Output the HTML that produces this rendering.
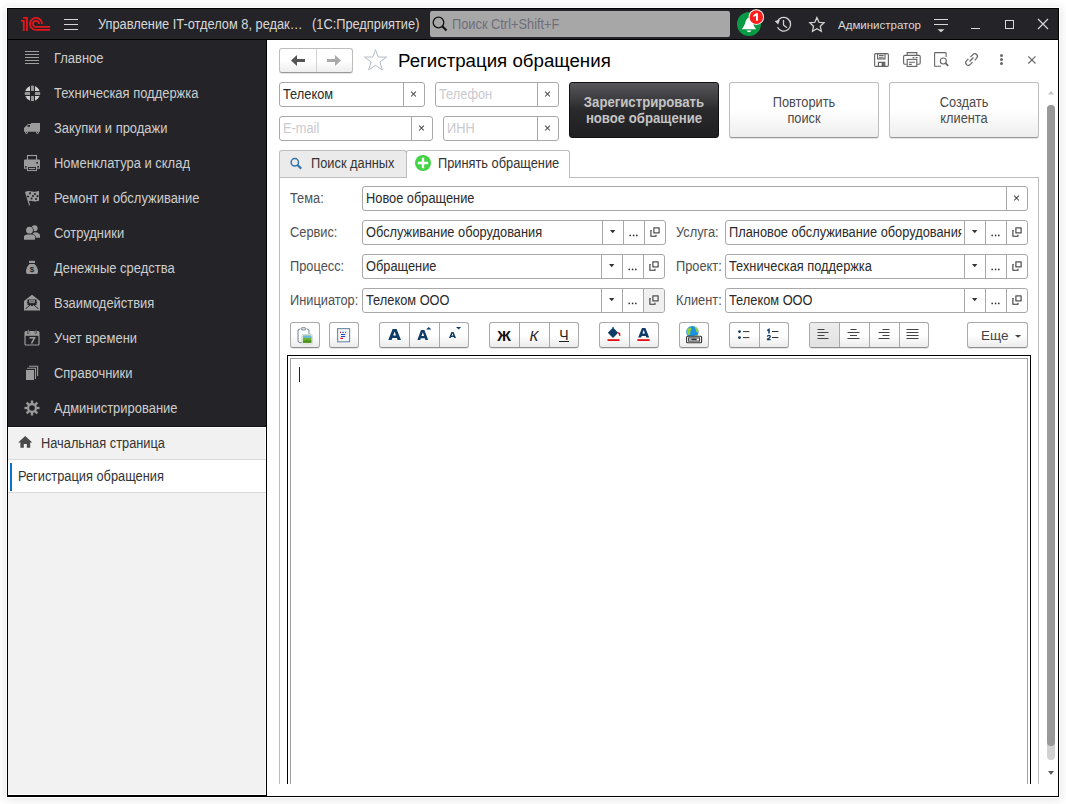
<!DOCTYPE html>
<html><head><meta charset="utf-8">
<style>
*{box-sizing:border-box;margin:0;padding:0}
html,body{width:1066px;height:804px;overflow:hidden;background:#fff;font-family:"Liberation Sans",sans-serif;font-size:13px}
.a{position:absolute}
svg{position:absolute;overflow:visible}
.t{position:absolute;white-space:nowrap;line-height:15px;font-size:14px;transform:scaleX(0.915);transform-origin:0 0}
.tc{transform-origin:50% 0}
.nt{transform:none}
#win{position:absolute;left:7px;top:8px;width:1052px;height:789px;border:1px solid #000;background:#fff;box-shadow:0 0 0 1px #fff,0 1px 9px 2px rgba(0,0,0,0.10)}
#hdr{position:absolute;left:0;top:0;width:1050px;height:31px;background:#242428;border-bottom:1px solid #000}
#side{position:absolute;left:0;top:31px;width:258px;height:387px;background:#242428;border-bottom:1px solid #121215}
.si{color:#cdcdcd;transform:scaleX(0.925)}
#lower{position:absolute;left:0;top:418px;width:258px;height:369px;background:#f2f2f2;border-top:1px solid #fff;border-right:1px solid #fff}
#vsep{position:absolute;left:258px;top:31px;width:1px;height:756px;background:#000}
#clip{position:absolute;left:259px;top:31px;width:791px;height:744px;overflow:hidden}
.fld{position:absolute;border:1px solid #a8a8a8;border-radius:3px;background:#fff;height:25px}
.dv{position:absolute;top:0;width:1px;height:23px;background:#a8a8a8}
.btn{position:absolute;border:1px solid #bdbdbd;border-bottom-color:#999;border-radius:3px;background:linear-gradient(#fff 0%,#fff 50%,#eee 100%);box-shadow:0 1px 0 rgba(0,0,0,0.10)}
.tb{position:absolute;height:26px;border:1px solid #a9a9a9;border-bottom-color:#8f8f8f;border-radius:3px;background:linear-gradient(#fff 0%,#fff 50%,#ececec 100%);box-shadow:0 1px 0 rgba(0,0,0,0.10)}
.tdv{position:absolute;top:0;width:1px;height:24px;background:#a9a9a9}
.lbl{color:#505050}
.ph{color:#c9c9d0}
.val{color:#2a2a2a}
.xx{position:absolute;top:5px;font-size:12px;line-height:13px;color:#555;text-align:center}
.ic{fill:#9b9b9b}
</style></head><body>
<div id="win">
  <div id="hdr">
    <svg style="left:10px;top:5px" width="36" height="20" viewBox="0 0 36 20">
      <g fill="none" stroke="#e3161c" stroke-width="1.8">
        <path d="M4.9 3.8 H8.95 V16.9"/>
        <path d="M3 6.85 H5.8 V16.9"/>
        <path d="M24.05 9.9 A6.05 6.05 0 1 0 18 15.95 H32.1"/>
        <path d="M21.07 9.9 A3.07 3.07 0 1 0 18 12.97 H32.1"/>
      </g>
    </svg>
    <div class="a" style="left:56px;top:9.8px;width:14px;height:1.5px;background:#d4d4d4"></div>
    <div class="a" style="left:56px;top:14.8px;width:14px;height:1.5px;background:#d4d4d4"></div>
    <div class="a" style="left:56px;top:19.8px;width:14px;height:1.5px;background:#d4d4d4"></div>
    <div class="t" style="left:90px;top:8px;color:#d8d8d8">Управление IT-отделом 8, редак…</div>
    <div class="t" style="left:304px;top:8px;color:#d8d8d8">(1С:Предприятие)</div>
    <div class="a" style="left:422px;top:2px;width:300px;height:26px;background:#a7a7a7;border-radius:2px"></div>
    <svg style="left:424px;top:7px" width="16" height="16" viewBox="0 0 16 16"><circle cx="6.5" cy="6.5" r="5.3" fill="none" stroke="#111" stroke-width="1.3"/><path d="M10.3 10.3 L14.5 14.5" stroke="#111" stroke-width="2"/></svg>
    <div class="t" style="left:444px;top:8px;color:#6e6e7a">Поиск Ctrl+Shift+F</div>
    <!-- bell -->
    <svg style="left:729px;top:3px" width="26" height="26" viewBox="0 0 26 26">
      <circle cx="12" cy="12" r="12" fill="#089a45"/>
      <path d="M4.8 17.2 C6.5 15.5 7.5 13 8.5 10 C9.5 7 10.5 5.8 12 5.8 C13.5 5.8 14.5 7 15.5 10 C16.5 13 17.5 15.5 19.2 17.2 Z" fill="#fff"/>
      <path d="M9.5 18.6 H14.5 C13.8 19.8 13 20.3 12 20.3 C11 20.3 10.2 19.8 9.5 18.6Z" fill="#fff"/>
    </svg>
    <svg style="left:740px;top:0px" width="18" height="18" viewBox="0 0 18 18">
      <circle cx="8.3" cy="8.1" r="7.8" fill="#fff"/>
      <circle cx="8.3" cy="8.1" r="6.8" fill="#fe1e1e"/>
      <path d="M5.2 6.3 L8.1 4.3 H9.9 V11.8 H8 V6.8 L5.7 8 Z" fill="#fff"/>
    </svg>
    <!-- history -->
    <svg style="left:762px;top:1px" width="22" height="22" viewBox="0 0 22 22">
      <g fill="none" stroke="#d4d4d4" stroke-width="1.25">
        <path d="M7.22 11.94 A6.9 6.9 0 1 1 7.5 17.3"/>
        <path d="M13.5 10.1 V14.9 L16.9 17.7"/>
      </g>
      <path d="M4.6 11.1 L9.8 10.1 L8.1 14.4 Z" fill="#d4d4d4"/>
    </svg>
    <!-- star -->
    <svg style="left:800px;top:7px" width="18" height="17" viewBox="0 0 18 17">
      <path d="M8.90 1.60 L10.97 6.25 L16.03 6.78 L12.25 10.19 L13.31 15.17 L8.90 12.62 L4.49 15.17 L5.55 10.19 L1.77 6.78 L6.83 6.25 Z" fill="none" stroke="#d4d4d4" stroke-width="1.25"/>
    </svg>
    <div class="t nt" style="left:830px;top:9px;color:#d8d8d8;font-size:11.5px">Администратор</div>
    <!-- filter -->
    <div class="a" style="left:926px;top:10px;width:14px;height:1.3px;background:#d8d8d8"></div>
    <div class="a" style="left:926px;top:15px;width:14px;height:1.3px;background:#d8d8d8"></div>
    <svg style="left:929px;top:19.6px" width="8" height="4" viewBox="0 0 8 4"><path d="M0.5 0.3 H7.5 L4 3.3Z" fill="#d8d8d8"/></svg>
    <!-- min max close -->
    <div class="a" style="left:963px;top:19px;width:9px;height:1.3px;background:#d8d8d8"></div>
    <div class="a" style="left:997px;top:11px;width:9px;height:9px;border:1.3px solid #d8d8d8"></div>
    <svg style="left:1030px;top:10px" width="10" height="10" viewBox="0 0 10 10"><path d="M0 0 L10 10 M10 0 L0 10" stroke="#d8d8d8" stroke-width="1.2"/></svg>
  </div>
  <div id="side">
    <!-- icons; box origin page(20, 46+35k) => inner (12, 6+35k) -->
    <svg style="left:12px;top:6px" width="24" height="24" viewBox="0 0 24 24"><g fill="#a0a0a0"><rect x="5" y="5" width="14" height="1"/><rect x="5" y="8" width="14" height="1"/><rect x="5" y="11" width="14" height="1"/><rect x="5" y="14" width="14" height="1"/><rect x="5" y="17" width="14" height="1"/></g></svg>
    <svg style="left:12px;top:42px" width="24" height="24" viewBox="0 0 24 24">
      <circle cx="12.45" cy="11.4" r="7.6" fill="#cfcfcf"/>
      <g fill="#242428"><rect x="10" y="3" width="1" height="17"/><rect x="14" y="3" width="1" height="17"/><rect x="4" y="9" width="17" height="1"/><rect x="4" y="13" width="17" height="1"/><rect x="10" y="9" width="5" height="5"/></g>
      <g fill="#979797"><rect x="11" y="3.8" width="3" height="5.2"/><rect x="11" y="14" width="3" height="5.1"/><rect x="4.9" y="10" width="5.1" height="3"/><rect x="15" y="10" width="5.1" height="3"/></g><rect x="11" y="10" width="3" height="3" fill="#242428"/>
    </svg>
    <svg style="left:12px;top:76px" width="24" height="24" viewBox="0 0 24 24">
      <path d="M4 12 L8 8 H11 V7 H20 V15.8 H4 Z" fill="#9b9b9b"/>
      <rect x="7.5" y="9" width="2.5" height="1.8" fill="#242428"/>
      <circle cx="6.5" cy="16.6" r="1.4" fill="#9b9b9b"/><circle cx="17.5" cy="16.6" r="1.4" fill="#9b9b9b"/>
      <circle cx="6.5" cy="16.6" r="0.5" fill="#242428"/><circle cx="17.5" cy="16.6" r="0.5" fill="#242428"/>
    </svg>
    <svg style="left:12px;top:111px" width="24" height="24" viewBox="0 0 24 24">
      <g fill="none" stroke="#9b9b9b" stroke-width="1.1"><rect x="7.5" y="4.5" width="9" height="5"/><rect x="7.5" y="15.5" width="9" height="4"/></g>
      <path d="M4 9.5 Q4 8.5 5 8.5 H19 Q20 8.5 20 9.5 V17.8 H17 V15 H7 V17.8 H4 Z" fill="#9b9b9b"/>
      <rect x="16.3" y="11" width="1.6" height="1.6" fill="#242428"/>
      <rect x="5" y="15" width="1.6" height="1.6" fill="#242428"/><rect x="17.4" y="15" width="1.6" height="1.6" fill="#242428"/>
      <rect x="9" y="17" width="6" height="1" fill="#9b9b9b"/>
    </svg>
    <svg style="left:12px;top:146px" width="24" height="24" viewBox="0 0 24 24">
      <path d="M5 6 Q8 4.5 12 5.5 Q15 6.3 19 5 V14.8 Q15 16 12 15 Q10 14.4 9 15 L10 19.5 H9 L5 6 Z" fill="#9b9b9b"/>
      <g fill="#242428"><circle cx="10" cy="7.3" r="1.1"/><circle cx="15" cy="8" r="1.1"/><circle cx="8" cy="10.5" r="1.1"/><circle cx="13" cy="10" r="1.1"/><circle cx="17.5" cy="10.2" r="1.1"/><circle cx="11.5" cy="12.5" r="1.1"/><circle cx="16" cy="13" r="1.1"/></g>
    </svg>
    <svg style="left:12px;top:181px" width="24" height="24" viewBox="0 0 24 24">
      <g fill="#9b9b9b"><circle cx="14.6" cy="7.2" r="3"/><path d="M13 12 Q14.6 11 17 11.5 Q20 12.5 20 14 V16.8 H13 Z"/></g>
      <g fill="#242428"><circle cx="9.5" cy="9.5" r="4.3"/><path d="M3 18.8 V14.5 Q4 13 6.5 12.8 H12.5 Q15 13 15.6 14.5 V18.8Z" transform="translate(0,0.4)"/></g>
      <g fill="#9b9b9b"><circle cx="9.5" cy="9.2" r="3.4"/><path d="M4 18.8 V15 Q5 13.6 7 13.4 H12 Q14 13.6 15 15 V18.8Z"/></g>
    </svg>
    <svg style="left:12px;top:216px" width="24" height="24" viewBox="0 0 24 24">
      <rect x="9" y="4.8" width="6" height="2.2" fill="#9b9b9b"/>
      <path d="M6 16 Q6 11 9.5 8 H14.5 Q18 11 18 16 Q18 18 16 18 H8 Q6 18 6 16Z" fill="#9b9b9b"/>
      <text x="12" y="15.6" font-size="8" font-weight="bold" text-anchor="middle" fill="#242428" font-family="Liberation Sans">$</text>
    </svg>
    <svg style="left:12px;top:251px" width="24" height="24" viewBox="0 0 24 24">
      <path d="M4 10 L12 3.8 L20 10 V19.6 H4 Z" fill="#9b9b9b"/>
      <rect x="7.5" y="8.5" width="9" height="5.5" fill="#242428"/>
      <rect x="9" y="9" width="6" height="3.2" fill="#7a7a7a"/>
      <path d="M5.5 17.8 L10 14 M18.5 17.8 L14 14 M7 11 L12 15 L17 11" stroke="#242428" stroke-width="1" fill="none"/>
    </svg>
    <svg style="left:12px;top:286px" width="24" height="24" viewBox="0 0 24 24">
      <path d="M4.5 6.5 Q4.5 5 6 5 H18 Q19.5 5 19.5 6.5 V9.5 H4.5Z" fill="#9b9b9b"/>
      <rect x="5" y="9" width="14" height="10" rx="1" fill="none" stroke="#9b9b9b" stroke-width="1.2"/>
      <rect x="7.6" y="3.8" width="1.4" height="3.6" fill="#9b9b9b" stroke="#242428" stroke-width="0.5"/>
      <rect x="15" y="3.8" width="1.4" height="3.6" fill="#9b9b9b" stroke="#242428" stroke-width="0.5"/>
      <path d="M9.5 11.8 H14.5 L11.5 17.5" fill="none" stroke="#9b9b9b" stroke-width="1.6"/>
    </svg>
    <svg style="left:12px;top:321px" width="24" height="24" viewBox="0 0 24 24">
      <rect x="6" y="9" width="8" height="10" fill="#9b9b9b"/>
      <path d="M7 7.3 H15.5 V18" fill="none" stroke="#9b9b9b" stroke-width="1.1"/>
      <path d="M9 5.3 H17.6 V15" fill="none" stroke="#9b9b9b" stroke-width="1.1"/>
    </svg>
    <svg style="left:12px;top:356px" width="24" height="24" viewBox="0 0 24 24">
      <g fill="#9b9b9b" transform="translate(12 12)">
        <rect x="-1.2" y="-7.5" width="2.4" height="15"/>
        <rect x="-1.2" y="-7.5" width="2.4" height="15" transform="rotate(45)"/>
        <rect x="-1.2" y="-7.5" width="2.4" height="15" transform="rotate(90)"/>
        <rect x="-1.2" y="-7.5" width="2.4" height="15" transform="rotate(135)"/>
        <circle r="5"/>
      </g>
      <circle cx="12" cy="12" r="2.8" fill="#242428"/>
    </svg>
    <div class="t si" style="left:46px;top:11px">Главное</div>
    <div class="t si" style="left:46px;top:46px">Техническая поддержка</div>
    <div class="t si" style="left:46px;top:81px">Закупки и продажи</div>
    <div class="t si" style="left:46px;top:116px">Номенклатура и склад</div>
    <div class="t si" style="left:46px;top:151px">Ремонт и обслуживание</div>
    <div class="t si" style="left:46px;top:186px">Сотрудники</div>
    <div class="t si" style="left:46px;top:221px">Денежные средства</div>
    <div class="t si" style="left:46px;top:256px">Взаимодействия</div>
    <div class="t si" style="left:46px;top:291px">Учет времени</div>
    <div class="t si" style="left:46px;top:326px">Справочники</div>
    <div class="t si" style="left:46px;top:361px">Администрирование</div>
  </div>
  <div id="lower">
    <div class="a" style="left:0;top:0;width:257px;height:31px;background:#f1f1f1"></div>
    <div class="a" style="left:0;top:31px;width:258px;height:1px;background:#d9d9d9"></div>
    <svg style="left:10px;top:8px" width="15" height="12" viewBox="0 0 15 12"><path d="M7.2 0 L14.3 6.6 H12.2 V11.8 H8.8 V8 H5.8 V11.8 H2.4 V6.6 H0.2 Z" fill="#4a4a4a"/></svg>
    <div class="t" style="left:33px;top:8px;color:#333">Начальная страница</div>
    <div class="a" style="left:0;top:32px;width:257px;height:32px;background:#fff"></div>
    <div class="a" style="left:0;top:64px;width:258px;height:1px;background:#d9d9d9"></div>
    <div class="a" style="left:2px;top:35px;width:2px;height:28px;background:#0a72cc"></div>
    <div class="t" style="left:10px;top:41px;color:#333">Регистрация обращения</div>
    <div class="a" style="left:0;top:366px;width:257px;height:1px;background:#fff"></div>
    <div class="a" style="left:0;top:367px;width:258px;height:1px;background:#000"></div>
  </div>
  <div id="vsep"></div>
  <div id="main" class="a" style="left:0;top:0;width:1050px;height:787px">
    <!-- nav -->
    <div class="btn" style="left:271px;top:39px;width:74px;height:25px"></div>
    <div class="a" style="left:308px;top:40px;width:1px;height:23px;background:#d4d4d4"></div>
    <svg style="left:283px;top:46px" width="14" height="11" viewBox="0 0 14 11"><path d="M0 5.5 L6 0 V4 H14 V7 H6 V11 Z" fill="#555"/></svg>
    <svg style="left:319px;top:46px" width="14" height="11" viewBox="0 0 14 11"><path d="M14 5.5 L8 0 V4 H0 V7 H8 V11 Z" fill="#a9a9a9"/></svg>
    <svg style="left:356px;top:40px" width="24" height="22" viewBox="0 0 24 22"><path d="M11.5 0.6 L14.2 8 H22.6 L15.9 12.9 L18.3 21 L11.5 16.3 L4.7 21 L7.1 12.9 L0.4 8 H8.8 Z" fill="none" stroke="#b6bdc7" stroke-width="1"/></svg>
    <div class="t nt" style="left:390px;top:41px;font-size:18.7px;line-height:21px;color:#000">Регистрация обращения</div>
    <!-- right toolbar icons -->
    <svg style="left:866px;top:44px" width="16" height="15" viewBox="0 0 16 15"><g fill="none" stroke="#666" stroke-width="1.15"><rect x="0.6" y="0.6" width="13.8" height="12.8" rx="1.2"/><path d="M3.6 0.6 V5.9 H11 V0.6"/><path d="M5 2.4 H9.6 M5 4.2 H9.6"/><path d="M4.4 13.4 V9.4 H10.8 V13.4"/></g><rect x="7.6" y="9.6" width="3" height="3.6" fill="#666"/></svg>
    <svg style="left:895px;top:43px" width="18" height="16" viewBox="0 0 18 16"><g fill="none" stroke="#666" stroke-width="1.15"><path d="M4.2 3.4 V0.6 H13.8 V3.4"/><path d="M3.8 12.2 H1.8 Q0.6 12.2 0.6 11 V4.6 Q0.6 3.4 1.8 3.4 H16 Q17.2 3.4 17.2 4.6 V11 Q17.2 12.2 16 12.2 H14"/><rect x="4.2" y="7.4" width="9.6" height="7" fill="#fff"/><path d="M6 10.2 H12 M6 12.4 H8.8"/><path d="M9.6 5.6 H11.4 M12.6 5.6 H14.6"/></g></svg>
    <svg style="left:926px;top:43px" width="16" height="15" viewBox="0 0 16 15"><g fill="none" stroke="#666" stroke-width="1.1"><path d="M7 14.3 H1.2 Q0.6 14.3 0.6 13.7 V1.2 Q0.6 0.6 1.2 0.6 H11.5 Q12.1 0.6 12.1 1.2 V5"/><circle cx="9.3" cy="9" r="3"/><path d="M11.5 11.2 L14.2 13.9" stroke-width="1.8"/></g></svg>
    <svg style="left:956px;top:43px" width="16" height="15" viewBox="0 0 16 15"><g fill="none" stroke="#666" stroke-width="1.2"><path d="M6.5 5 L8.6 2.8 Q10.6 0.8 12.6 2.5 Q14.4 4.4 12.5 6.4 L10.6 8.3"/><path d="M8.5 10.2 L6.4 12.4 Q4.4 14.3 2.5 12.6 Q0.7 10.6 2.6 8.7 L4.4 6.9"/><path d="M5.5 9.5 L9.5 5.5"/></g></svg>
        <div class="a" style="left:991.5px;top:44.5px;width:3px;height:3px;border-radius:50%;background:#666"></div>
    <div class="a" style="left:991.5px;top:48.5px;width:3px;height:3px;border-radius:50%;background:#666"></div>
    <div class="a" style="left:991.5px;top:52.5px;width:3px;height:3px;border-radius:50%;background:#666"></div>
    <svg style="left:1020px;top:47px" width="8" height="8" viewBox="0 0 8 8"><path d="M0.3 0.3 L7.5 7.5 M7.5 0.3 L0.3 7.5" stroke="#666" stroke-width="1.1"/></svg>
    <!-- fields -->
    <div class="fld" style="left:271px;top:73px;width:146px"><div class="dv" style="left:123px"></div><svg style="left:130px;top:8px" width="7" height="7" viewBox="0 0 7 7"><path d="M1.1 0.7 L5.9 5.5 M5.9 0.7 L1.1 5.5" stroke="#444" stroke-width="1.05"/></svg></div>
    <div class="t val" style="left:275px;top:78px">Телеком</div>
    <div class="fld" style="left:427px;top:73px;width:124px"><div class="dv" style="left:101px"></div><svg style="left:108px;top:8px" width="7" height="7" viewBox="0 0 7 7"><path d="M1.1 0.7 L5.9 5.5 M5.9 0.7 L1.1 5.5" stroke="#444" stroke-width="1.05"/></svg></div>
    <div class="t ph" style="left:431px;top:78px">Телефон</div>
    <div class="fld" style="left:271px;top:107px;width:154px"><div class="dv" style="left:131px"></div><svg style="left:138px;top:8px" width="7" height="7" viewBox="0 0 7 7"><path d="M1.1 0.7 L5.9 5.5 M5.9 0.7 L1.1 5.5" stroke="#444" stroke-width="1.05"/></svg></div>
    <div class="t ph" style="left:275px;top:112px">E-mail</div>
    <div class="fld" style="left:435px;top:107px;width:116px"><div class="dv" style="left:93px"></div><svg style="left:100px;top:8px" width="7" height="7" viewBox="0 0 7 7"><path d="M1.1 0.7 L5.9 5.5 M5.9 0.7 L1.1 5.5" stroke="#444" stroke-width="1.05"/></svg></div>
    <div class="t ph" style="left:439px;top:112px">ИНН</div>
    <!-- big buttons -->
    <div class="a" style="left:561px;top:73px;width:150px;height:56px;border:1px solid #111;border-radius:3px;background:linear-gradient(#57575b,#2a2a2d 50%,#1f1f22)"></div>
    <div class="t tc" style="left:561px;top:85px;width:150px;text-align:center;font-weight:bold;transform:scaleX(0.94);color:#c4c4c4;line-height:16px">Зарегистрировать<br>новое обращение</div>
    <div class="btn" style="left:721px;top:73px;width:150px;height:56px"></div>
    <div class="t tc" style="left:721px;top:85px;width:150px;text-align:center;color:#4a4a4a;line-height:16px">Повторить<br>поиск</div>
    <div class="btn" style="left:881px;top:73px;width:150px;height:56px"></div>
    <div class="t tc" style="left:881px;top:85px;width:150px;text-align:center;color:#4a4a4a;line-height:16px">Создать<br>клиента</div>
    <!-- tabs -->
    <div class="a" style="left:271px;top:141px;width:128px;height:28px;background:#ebebeb;border:1px solid #bdbdbd;border-bottom:none;border-radius:3px 3px 0 0"></div>
    <svg style="left:281px;top:148px" width="13" height="13" viewBox="0 0 13 13"><circle cx="5.8" cy="5.3" r="3.7" fill="none" stroke="#3576ad" stroke-width="1.5"/><path d="M8.5 8 L12.2 11.6" stroke="#3576ad" stroke-width="2.2"/></svg>
    <div class="t" style="left:303px;top:147px;color:#333">Поиск данных</div>
    <div class="a" style="left:398px;top:141px;width:164px;height:28px;background:#fff;border:1px solid #bdbdbd;border-bottom:none;border-radius:3px 3px 0 0"></div>
    <svg style="left:407px;top:146px" width="16" height="16" viewBox="0 0 16 16"><circle cx="8" cy="8" r="8" fill="#45d345"/><path d="M8 2.8 V13.2 M2.8 8 H13.2" stroke="#fff" stroke-width="2.4"/></svg>
    <div class="t" style="left:430px;top:147px;color:#333">Принять обращение</div>
    <div class="a" style="left:271px;top:168px;width:1px;height:607px;background:#bdbdbd"></div>
    <div class="a" style="left:561px;top:168px;width:470px;height:1px;background:#bdbdbd"></div>
    <div class="a" style="left:271px;top:168px;width:128px;height:1px;background:#bdbdbd"></div>
    <div class="a" style="left:1030px;top:168px;width:1px;height:607px;background:#bdbdbd"></div>
    <!-- form rows -->
    <div class="t lbl" style="left:282px;top:182px">Тема:</div>
    <div class="fld" style="left:354px;top:177px;width:666px"><div class="dv" style="left:643px"></div><svg style="left:650px;top:8px" width="7" height="7" viewBox="0 0 7 7"><path d="M1.1 0.7 L5.9 5.5 M5.9 0.7 L1.1 5.5" stroke="#444" stroke-width="1.05"/></svg></div>
    <div class="t val" style="left:358px;top:182px">Новое обращение</div>
    <div class="t lbl" style="left:282px;top:216px">Сервис:</div>
    <div class="fld" style="left:354px;top:211px;width:304px"><div class="dv" style="left:239px"></div><div class="dv" style="left:260px"></div><div class="dv" style="left:281px"></div>
      <svg style="left:247px;top:9px" width="6" height="4" viewBox="0 0 6 4"><path d="M0 0 H5.4 L2.7 3.2Z" fill="#333"/></svg>
      <svg style="left:266px;top:13px" width="9" height="3" viewBox="0 0 9 3"><g fill="#333"><circle cx="1.2" cy="1.4" r="0.85"/><circle cx="4.6" cy="1.4" r="0.85"/><circle cx="7.8" cy="1.4" r="0.85"/></g></svg>
      <svg style="left:287px;top:6px" width="10" height="10" viewBox="0 0 10 10"><g fill="none" stroke="#333" stroke-width="1.05"><rect x="3.9" y="0.9" width="5.2" height="5"/><path d="M1.7 3.6 H0.9 V9.2 H6 V7.7"/></g></svg>
      <div class="t val" style="left:3px;top:4px;">Обслуживание оборудования</div>
    </div>
    <div class="t lbl" style="left:668px;top:216px">Услуга:</div>
    <div class="fld" style="left:717px;top:211px;width:303px"><div class="dv" style="left:238px"></div><div class="dv" style="left:259px"></div><div class="dv" style="left:280px"></div>
      <svg style="left:246px;top:9px" width="6" height="4" viewBox="0 0 6 4"><path d="M0 0 H5.4 L2.7 3.2Z" fill="#333"/></svg>
      <svg style="left:265px;top:13px" width="9" height="3" viewBox="0 0 9 3"><g fill="#333"><circle cx="1.2" cy="1.4" r="0.85"/><circle cx="4.6" cy="1.4" r="0.85"/><circle cx="7.8" cy="1.4" r="0.85"/></g></svg>
      <svg style="left:286px;top:6px" width="10" height="10" viewBox="0 0 10 10"><g fill="none" stroke="#333" stroke-width="1.05"><rect x="3.9" y="0.9" width="5.2" height="5"/><path d="M1.7 3.6 H0.9 V9.2 H6 V7.7"/></g></svg>
      <div class="t val" style="left:3px;top:4px;width:254px;overflow:hidden;">Плановое обслуживание оборудования</div>
    </div>
    <div class="t lbl" style="left:282px;top:250px">Процесс:</div>
    <div class="fld" style="left:354px;top:245px;width:303px"><div class="dv" style="left:238px"></div><div class="dv" style="left:259px"></div><div class="dv" style="left:280px"></div>
      <svg style="left:246px;top:9px" width="6" height="4" viewBox="0 0 6 4"><path d="M0 0 H5.4 L2.7 3.2Z" fill="#333"/></svg>
      <svg style="left:265px;top:13px" width="9" height="3" viewBox="0 0 9 3"><g fill="#333"><circle cx="1.2" cy="1.4" r="0.85"/><circle cx="4.6" cy="1.4" r="0.85"/><circle cx="7.8" cy="1.4" r="0.85"/></g></svg>
      <svg style="left:286px;top:6px" width="10" height="10" viewBox="0 0 10 10"><g fill="none" stroke="#333" stroke-width="1.05"><rect x="3.9" y="0.9" width="5.2" height="5"/><path d="M1.7 3.6 H0.9 V9.2 H6 V7.7"/></g></svg>
      <div class="t val" style="left:3px;top:4px;">Обращение</div>
    </div>
    <div class="t lbl" style="left:668px;top:250px">Проект:</div>
    <div class="fld" style="left:717px;top:245px;width:303px"><div class="dv" style="left:238px"></div><div class="dv" style="left:259px"></div><div class="dv" style="left:280px"></div>
      <svg style="left:246px;top:9px" width="6" height="4" viewBox="0 0 6 4"><path d="M0 0 H5.4 L2.7 3.2Z" fill="#333"/></svg>
      <svg style="left:265px;top:13px" width="9" height="3" viewBox="0 0 9 3"><g fill="#333"><circle cx="1.2" cy="1.4" r="0.85"/><circle cx="4.6" cy="1.4" r="0.85"/><circle cx="7.8" cy="1.4" r="0.85"/></g></svg>
      <svg style="left:286px;top:6px" width="10" height="10" viewBox="0 0 10 10"><g fill="none" stroke="#333" stroke-width="1.05"><rect x="3.9" y="0.9" width="5.2" height="5"/><path d="M1.7 3.6 H0.9 V9.2 H6 V7.7"/></g></svg>
      <div class="t val" style="left:3px;top:4px;">Техническая поддержка</div>
    </div>
    <div class="t lbl" style="left:282px;top:284px">Инициатор:</div>
    <div class="fld" style="left:354px;top:279px;width:303px"><div class="a" style="left:281px;top:0;width:20px;height:23px;background:#f0f0f0;border-radius:0 2px 2px 0"></div><div class="dv" style="left:238px"></div><div class="dv" style="left:259px"></div><div class="dv" style="left:280px"></div>
      <svg style="left:246px;top:9px" width="6" height="4" viewBox="0 0 6 4"><path d="M0 0 H5.4 L2.7 3.2Z" fill="#333"/></svg>
      <svg style="left:265px;top:13px" width="9" height="3" viewBox="0 0 9 3"><g fill="#333"><circle cx="1.2" cy="1.4" r="0.85"/><circle cx="4.6" cy="1.4" r="0.85"/><circle cx="7.8" cy="1.4" r="0.85"/></g></svg>
      <svg style="left:286px;top:6px" width="10" height="10" viewBox="0 0 10 10"><g fill="none" stroke="#333" stroke-width="1.05"><rect x="3.9" y="0.9" width="5.2" height="5"/><path d="M1.7 3.6 H0.9 V9.2 H6 V7.7"/></g></svg>
      <div class="t val" style="left:3px;top:4px;">Телеком ООО</div>
    </div>
    <div class="t lbl" style="left:668px;top:284px">Клиент:</div>
    <div class="fld" style="left:717px;top:279px;width:303px"><div class="dv" style="left:238px"></div><div class="dv" style="left:259px"></div><div class="dv" style="left:280px"></div>
      <svg style="left:246px;top:9px" width="6" height="4" viewBox="0 0 6 4"><path d="M0 0 H5.4 L2.7 3.2Z" fill="#333"/></svg>
      <svg style="left:265px;top:13px" width="9" height="3" viewBox="0 0 9 3"><g fill="#333"><circle cx="1.2" cy="1.4" r="0.85"/><circle cx="4.6" cy="1.4" r="0.85"/><circle cx="7.8" cy="1.4" r="0.85"/></g></svg>
      <svg style="left:286px;top:6px" width="10" height="10" viewBox="0 0 10 10"><g fill="none" stroke="#333" stroke-width="1.05"><rect x="3.9" y="0.9" width="5.2" height="5"/><path d="M1.7 3.6 H0.9 V9.2 H6 V7.7"/></g></svg>
      <div class="t val" style="left:3px;top:4px;">Телеком ООО</div>
    </div>
    <!-- format toolbar -->
    <div class="tb" style="left:282px;top:313px;width:30px"></div>
    <svg style="left:289px;top:318px" width="17" height="17" viewBox="0 0 17 17">
      <path d="M3 2 Q1 2 1 4 V13.6 Q1 15.6 3 15.6 H5 M12 7 V4 Q12 2 10 2" fill="none" stroke="#6f8294" stroke-width="1"/>
      <ellipse cx="6.5" cy="1.8" rx="2.6" ry="1.2" fill="#e8eef2" stroke="#6f8294" stroke-width="1"/>
      <rect x="4.8" y="7.5" width="10.6" height="9.4" rx="1" fill="#fff" stroke="#d0d0d0" stroke-width="0.9"/>
      <rect x="5.9" y="8.6" width="8.4" height="7.2" fill="#5aa12a"/>
      <rect x="5.9" y="8.6" width="8.4" height="2.6" fill="#6ab8ee"/>
      <path d="M5.9 11.6 Q7.5 9.8 9.5 10.8 Q11.5 11.8 14.3 10.2 V15.8 H5.9Z" fill="#6cb52e"/>
      <path d="M5.9 14 Q9 12.5 14.3 13.5 V15.8 H5.9Z" fill="#4e9422"/>
    </svg>
    <div class="tb" style="left:321px;top:313px;width:30px"></div>
    <svg style="left:329px;top:319px" width="14" height="15" viewBox="0 0 14 15">
      <rect x="0.6" y="0.6" width="12" height="13.2" fill="#f2f6fa" stroke="#6f8aa0" stroke-width="1.1"/>
      <g stroke-width="1.2"><path d="M3 4.4 H4 M8.1 4.4 H9.1" stroke="#e01010"/><path d="M5.4 4.4 H6.6 M4 6.5 H8.2 M4 8.5 H8.2" stroke="#2040c0"/><path d="M3.2 10.4 H5.9" stroke="#e01010"/></g>
    </svg>
    <div class="tb" style="left:371px;top:313px;width:90px"><div class="tdv" style="left:29px"></div><div class="tdv" style="left:59px"></div></div>
    <svg style="left:380px;top:320px" width="14" height="12" viewBox="0 0 14 12"><path d="M4.6 0 H8.6 L13 11 H9.6 L8.9 9 H4.3 L3.6 11 H0.3 Z M5.2 6.5 H8 L6.6 2.6Z" fill="#0f3c66" fill-rule="evenodd"/></svg>
    <svg style="left:409px;top:320px" width="12" height="12" viewBox="0 0 12 12"><path d="M4 1 H7.4 L11.2 11 H8.4 L7.8 9.2 H3.8 L3.2 11 H0.4 Z M4.5 6.9 H7.1 L5.8 3.3Z" fill="#0f3c66" fill-rule="evenodd"/></svg>
    <svg style="left:418px;top:318px" width="6" height="3" viewBox="0 0 6 3"><path d="M0 2.6 L2.7 0 L5.4 2.6Z" fill="#0f3c66"/></svg>
    <svg style="left:441px;top:323px" width="8" height="7" viewBox="0 0 8 7"><path d="M2.4 0 H4.6 L7 6 H5.3 L4.9 5 H2.1 L1.7 6 H0 Z M2.6 3.6 H4.4 L3.5 1.3Z" fill="#0f3c66" fill-rule="evenodd"/></svg>
    <svg style="left:448px;top:318px" width="6" height="3" viewBox="0 0 6 3"><path d="M0 0 H5.2 L2.6 2.6Z" fill="#0f3c66"/></svg>
    <div class="tb" style="left:481px;top:313px;width:90px"><div class="tdv" style="left:29px"></div><div class="tdv" style="left:59px"></div></div>
    <div class="t nt" style="left:481px;top:318px;width:30px;text-align:center;font-weight:bold;font-size:15px;line-height:17px;color:#111">Ж</div>
    <div class="t nt" style="left:511px;top:318px;width:30px;text-align:center;font-style:italic;font-size:15px;line-height:17px;color:#222">К</div>
    <div class="t nt" style="left:541px;top:318px;width:30px;text-align:center;font-size:14px;line-height:17px;color:#222">Ч</div>
    <div class="a" style="left:551px;top:332px;width:10px;height:1px;background:#222"></div>
    <div class="tb" style="left:591px;top:313px;width:60px"><div class="tdv" style="left:29px"></div></div>
    <svg style="left:599px;top:317px" width="14" height="16" viewBox="0 0 14 16">
      <path d="M6 1.5 L11.2 6.7 L6 11.9 L0.8 6.7 Z" fill="#0f3c66"/>
      <path d="M11.2 6.7 Q13.2 7.2 12.6 9.8" fill="none" stroke="#e01010" stroke-width="1.4"/>
      <circle cx="6" cy="1.6" r="0.9" fill="#3a6fa0"/>
      <rect x="0.5" y="13.2" width="12" height="1.8" fill="#e01010"/>
    </svg>
    <svg style="left:629px;top:319px" width="14" height="14" viewBox="0 0 14 14"><path d="M5 0 H8.4 L12.2 9.6 H9.3 L8.7 7.9 H4.7 L4.1 9.6 H1.2 Z M5.4 5.6 H8 L6.7 2.1Z" fill="#0f3c66" fill-rule="evenodd"/><rect x="0.3" y="11.2" width="12.4" height="1.8" fill="#e01010"/></svg>
    <div class="tb" style="left:671px;top:313px;width:30px"></div>
    <svg style="left:678px;top:317px" width="17" height="18" viewBox="0 0 17 18">
      <circle cx="6.4" cy="6.1" r="6.2" fill="#1b8fe6"/>
      <path d="M1.2 3.8 Q2.5 1.2 5 1.4 Q6.2 2.8 4.8 4.6 Q3.5 6.5 4.5 8 Q3 9.5 1.5 8.5 Q0.2 6.5 1.2 3.8Z M8 0.4 Q11.5 1.2 12.5 4.5 Q12.3 7 11 6.2 Q9.5 5.5 9.8 3.5 Q9 2 8 0.4Z M8.5 9.5 Q10.5 8.5 11.8 9.2 Q10.5 11.5 8.8 11.8Z" fill="#8fd23c"/>
      <rect x="0.6" y="10.2" width="15" height="6.6" rx="1" fill="#fff" stroke="#333" stroke-width="1.1"/>
      <rect x="2.6" y="11.9" width="11" height="3.2" fill="#fff" stroke="#333" stroke-width="1"/>
      <rect x="5.3" y="12.6" width="5.4" height="1.6" fill="#333"/>
      <rect x="3.4" y="12.9" width="1.4" height="1" fill="#5ab0e8"/>
    </svg>
    <div class="tb" style="left:721px;top:313px;width:60px"><div class="tdv" style="left:29px"></div></div>
    <svg style="left:730px;top:321px" width="13" height="9" viewBox="0 0 13 9"><circle cx="1.5" cy="1.6" r="1.4" fill="#0f3c66"/><circle cx="1.5" cy="7.6" r="1.4" fill="#0f3c66"/><path d="M5 1.6 H11.4 M5 7.6 H11.4" stroke="#333" stroke-width="1"/></svg>
    <svg style="left:759px;top:320px" width="13" height="12" viewBox="0 0 13 12"><path d="M0.2 1.6 L2 0.4 V4.6" fill="none" stroke="#0f3c66" stroke-width="1.5"/><path d="M0.3 7.6 Q0.6 6.4 1.8 6.4 Q3.4 6.4 3.2 7.8 Q3 8.6 0.5 10 V10.6 H3.6" fill="none" stroke="#0f3c66" stroke-width="1.3"/><path d="M5 2.5 H11.4 M5 8.5 H11.4" stroke="#333" stroke-width="1"/></svg>
    <div class="tb" style="left:801px;top:313px;width:120px"><div class="a" style="left:0;top:0;width:29px;height:24px;background:linear-gradient(#ececec,#e2e2e2);border-radius:2px 0 0 2px"></div><div class="tdv" style="left:29px"></div><div class="tdv" style="left:59px"></div><div class="tdv" style="left:89px"></div></div>
    <svg style="left:809px;top:320px" width="13" height="11" viewBox="0 0 13 11"><path d="M0.5 0.5 H7.5 M0.5 3.5 H11.5 M0.5 6.5 H7.5 M0.5 9.5 H11.5" stroke="#444" stroke-width="1"/></svg>
    <svg style="left:839px;top:320px" width="13" height="11" viewBox="0 0 13 11"><path d="M3.5 0.5 H9.5 M0.5 3.5 H12.5 M3 6.5 H10 M0.5 9.5 H12.5" stroke="#444" stroke-width="1"/></svg>
    <svg style="left:869px;top:320px" width="13" height="11" viewBox="0 0 13 11"><path d="M5.5 0.5 H12.5 M1.5 3.5 H12.5 M5.5 6.5 H12.5 M1.5 9.5 H12.5" stroke="#444" stroke-width="1"/></svg>
    <svg style="left:898px;top:320px" width="13" height="11" viewBox="0 0 13 11"><path d="M0.5 0.5 H12.5 M0.5 3.5 H12.5 M0.5 6.5 H12.5 M0.5 9.5 H12.5" stroke="#444" stroke-width="1"/></svg>
    <div class="tb" style="left:959px;top:313px;width:61px"></div>
    <div class="t nt" style="left:973px;top:319px;color:#444;font-size:13.5px">Еще</div>
    <svg style="left:1007px;top:325.5px" width="7" height="4" viewBox="0 0 7 4"><path d="M0 0 H6.2 L3.1 2.8Z" fill="#444"/></svg>
    <!-- cursor -->
    <div class="a" style="left:291px;top:358px;width:1px;height:15px;background:#222"></div>
    <!-- scrollbar -->
    <svg style="left:1040px;top:82px" width="6" height="4" viewBox="0 0 6 4"><path d="M0 3.5 L3 0 L6 3.5Z" fill="#c4c4c4"/></svg>
    <div class="a" style="left:1039px;top:96px;width:8px;height:655px;border-radius:4px;background:#d2d2d2"></div>
    <div class="a" style="left:1039px;top:96px;width:8px;height:641px;border-radius:4px;background:#999"></div>
    <svg style="left:1040px;top:762px" width="6" height="4" viewBox="0 0 6 4"><path d="M0 0 H6 L3 3.8Z" fill="#555"/></svg>
  </div>
  <div class="a" style="left:279px;top:346px;width:744px;height:429px;border:1px solid #000;border-bottom:none"></div>
  <div class="a" style="left:282px;top:349px;width:738px;height:426px;border:1px solid #a0a0a0;border-bottom:none"></div>
</div>
</body></html>
